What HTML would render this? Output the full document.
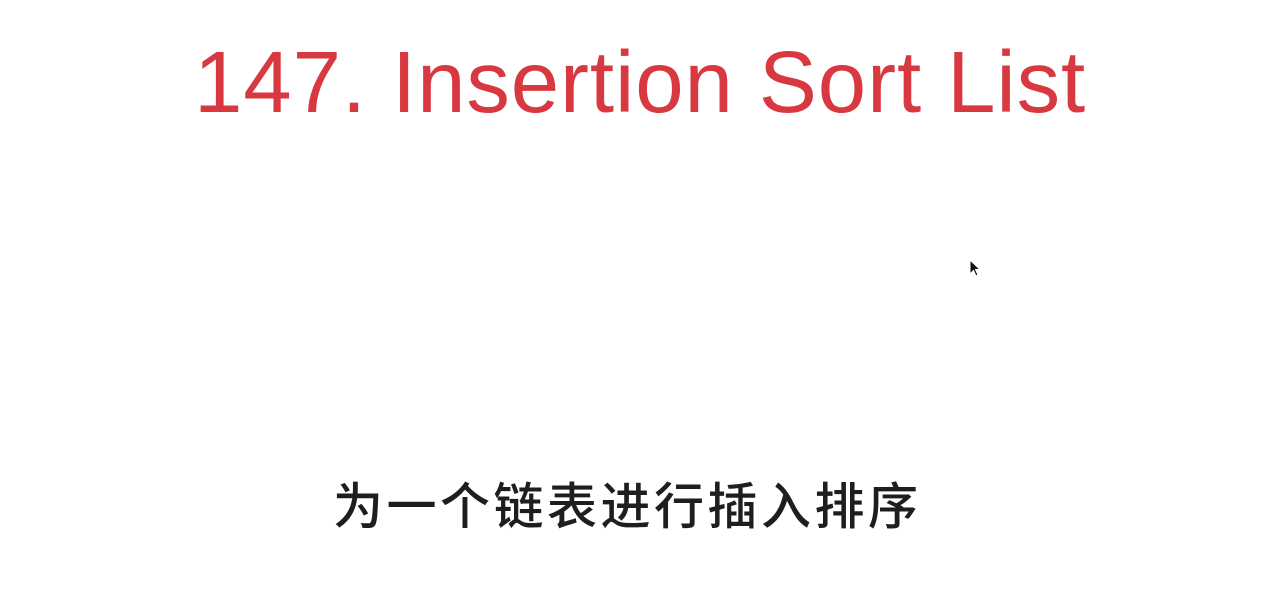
<!DOCTYPE html>
<html><head><meta charset="utf-8"><style>
html,body{margin:0;padding:0;background:#fff;width:1264px;height:590px;overflow:hidden;position:relative}
.t{position:absolute;left:194px;top:33px;font-family:"Liberation Sans",sans-serif;font-size:87px;color:#d8383f;white-space:nowrap;letter-spacing:0.9px}
.s{position:absolute;left:333px;top:467px;font-family:"Liberation Sans","Noto Sans CJK SC",sans-serif;font-size:50px;color:#1e1e1e;white-space:nowrap;letter-spacing:3.5px;font-weight:500}
</style></head><body>
<div class="t">147. Insertion Sort List</div>
<svg style="position:absolute;left:969px;top:259px" width="14" height="22" viewBox="0 0 14 22"><path d="M1 1 L1 15 L4.5 11.5 L7 17 L9 16 L6.5 10.5 L11 10.5 Z" fill="#111" stroke="#fff" stroke-width="1"/></svg>
<div class="s">为一个链表进行插入排序</div>
</body></html>
